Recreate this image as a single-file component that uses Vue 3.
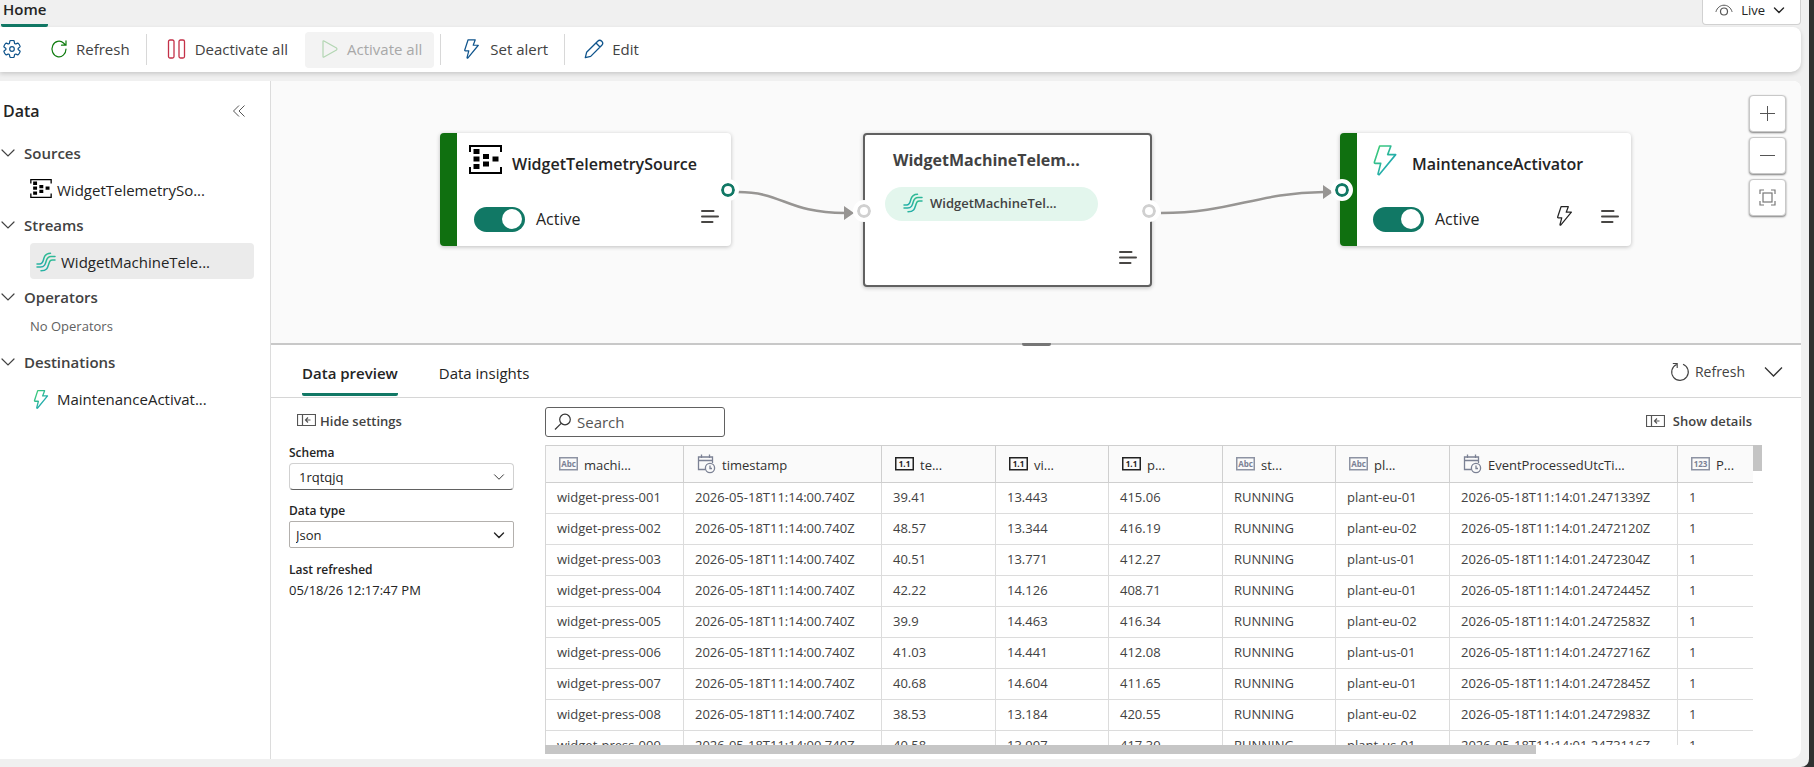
<script setup>
import { ref } from 'vue'

const ops = ref(true)
const act = ref(true)
const query = ref('')

const columns = [
  { name: 'machi...', type: 'Abc', width: 138 },
  { name: 'timestamp', type: 'date', width: 198 },
  { name: 'te...', type: '1.1', width: 114 },
  { name: 'vi...', type: '1.1', width: 113 },
  { name: 'p...', type: '1.1', width: 114 },
  { name: 'st...', type: 'Abc', width: 113 },
  { name: 'pl...', type: 'Abc', width: 114 },
  { name: 'EventProcessedUtcTi...', type: 'date', width: 228 },
  { name: 'P...', type: '123', width: 114 },
]

const stamp = '2026-05-18T11:14:00.740Z'
const rows = [
  ['001', '39.41', '13.443', '415.06', 'plant-eu-01', '1339'],
  ['002', '48.57', '13.344', '416.19', 'plant-eu-02', '2120'],
  ['003', '40.51', '13.771', '412.27', 'plant-us-01', '2304'],
  ['004', '42.22', '14.126', '408.71', 'plant-eu-01', '2445'],
  ['005', '39.9', '14.463', '416.34', 'plant-eu-02', '2583'],
  ['006', '41.03', '14.441', '412.08', 'plant-us-01', '2716'],
  ['007', '40.68', '14.604', '411.65', 'plant-eu-01', '2845'],
  ['008', '38.53', '13.184', '420.55', 'plant-eu-02', '2983'],
  ['009', '40.58', '13.997', '417.39', 'plant-us-01', '3116'],
].map(([id, temp, vib, pres, plant, tick]) => [
  `widget-press-${id}`, stamp, temp, vib, pres, 'RUNNING', plant,
  `2026-05-18T11:14:01.247${tick}Z`, '1',
])
</script>

<template>
  <svg class="defs" aria-hidden="true">
    <defs>
      <linearGradient id="teal" x1="0" y1="0" x2="1" y2="1">
        <stop offset="0.1" stop-color="#3ccb78" />
        <stop offset="0.7" stop-color="#22aab0" />
      </linearGradient>
      <symbol id="bolt" viewBox="0 0 22 29">
        <path d="M6 1H16.5L13.5 9H21L5.5 27.8Q4.3 28 4.5 26.8L7 17.2H2Q.8 17.2 1.1 16Z" fill="none" stroke-linejoin="round" />
      </symbol>
      <symbol id="stream" viewBox="0 0 20 20">
        <g fill="none" stroke-linecap="round">
          <path d="M1 12H3.5C6.8 12 7 9.500 7.800 6.500S10 1.200 14.500 1.200" />
          <path d="M1 15H4.500C8.800 15 9.300 12 10.200 9S12 4.600 15 4.600H19" />
          <path d="M5 18.800C11 18.800 11.600 16 12.600 12.500S14 8 16.500 8H19" />
        </g>
      </symbol>
      <symbol id="source" viewBox="0 0 33 29">
        <path d="M1 7V1H32V7M1 22V28H32V22" fill="none" stroke="#000" stroke-width="2" />
        <path d="M4.500 4h6v5h-6zM4.500 11.500h6v5h-6zM4.500 19h6v5h-6zM14 9h6v5h-6zM14 16.500h6v5h-6zM23.500 11.500h6v5h-6z" />
      </symbol>
      <symbol id="lines" viewBox="0 0 18 15">
        <path d="M1 2H12.500M1 7.500H17M1 13H11.500" fill="none" stroke="#484644" stroke-width="2" stroke-linecap="round" />
      </symbol>
      <symbol id="chevron" viewBox="0 0 16 16">
        <path d="M2 5L8 11L14 5" fill="none" stroke="currentColor" stroke-width="1.200" stroke-linecap="round" />
      </symbol>
      <symbol id="chevron-bold" viewBox="0 0 12 12">
        <path d="M1.500 4L6 8.500L10.500 4" fill="none" stroke="currentColor" stroke-width="1.400" stroke-linecap="round" />
      </symbol>
      <symbol id="pane" viewBox="0 0 19 12">
        <path d="M.5.5H18.500V11.500H.5ZM5.500.5V11.500M13.500 6H8.500M11 3.500L8.500 6L11 8.500" fill="none" stroke="#555" stroke-width="1.200" />
      </symbol>
    </defs>
  </svg>

  <div class="shell">
    <header class="top">
      <a class="home" href="#home">Home</a>
      <button class="live">
        <svg width="18" height="12" viewBox="0 0 18 12" fill="none" stroke="#555"><path d="M1 7.500C3.500-1 14.500-1 17 7.500" stroke-linecap="round" /><circle cx="9" cy="7.500" r="3.500" stroke-width="1.200" /></svg>
        <span>Live</span>
        <svg width="12" height="12"><use href="#chevron-bold" /></svg>
      </button>
    </header>

    <nav class="toolbar" aria-label="Commands">
      <button class="tool gear" aria-label="Settings">
        <svg width="20" height="20" viewBox="0 0 20 20" fill="none" stroke="#0f548c" stroke-width="1.200"><path d="M1.910 7.380A8.500 8.500 0 0 1 3.700 4.300a.5.500 0 0 1 .54-.13l1.920.68a1 1 0 0 0 1.320-.76l.36-2a.5.500 0 0 1 .4-.4 8.530 8.530 0 0 1 3.550 0c.2.040.35.200.38.400l.37 2a1 1 0 0 0 1.320.760l1.920-.68a.5.500 0 0 1 .54.130 8.500 8.500 0 0 1 1.780 3.080c.06.200 0 .400-.15.540l-1.560 1.320a1 1 0 0 0 0 1.520l1.560 1.320a.5.500 0 0 1 .15.540 8.500 8.500 0 0 1-1.780 3.080.5.500 0 0 1-.54.130l-1.920-.68a1 1 0 0 0-1.320.760l-.37 2a.5.500 0 0 1-.38.400 8.530 8.530 0 0 1-3.560 0 .5.500 0 0 1-.39-.4l-.36-2a1 1 0 0 0-1.320-.76l-1.920.68a.5.500 0 0 1-.54-.13 8.500 8.500 0 0 1-1.780-3.080.5.500 0 0 1 .15-.54l1.560-1.320a1 1 0 0 0 0-1.520L2.060 7.920a.5.500 0 0 1-.15-.54Z" /><circle cx="10" cy="10" r="2.300" /></svg>
      </button>
      <button class="tool refresh">
        <svg width="18" height="20" viewBox="0 0 18 20" fill="none" stroke="#107c10" stroke-width="1.200" stroke-linecap="round"><path d="M16 10A7 7.800 0 1 1 13.500 4L15.500 6M16 1.800V6.200H11.500" /></svg>
        Refresh
      </button>
      <i class="rule"></i>
      <button class="tool deactivate">
        <svg width="20" height="20" viewBox="0 0 20 20" fill="none" stroke="#c43148" stroke-width="1.300"><rect x="1.500" y="1" width="5.500" height="18" rx="1.500" /><rect x="12" y="1" width="5.500" height="18" rx="1.500" /></svg>
        Deactivate all
      </button>
      <button class="tool activate" disabled>
        <svg width="18" height="20" viewBox="0 0 18 20" fill="none" stroke="#b3d6b3" stroke-width="1.200" stroke-linejoin="round"><path d="M2 2.500V17.500Q2 18.500 3 18L15.500 11Q16.500 10 15.500 9L3 2Q2 1.500 2 2.500Z" /></svg>
        Activate all
      </button>
      <i class="rule"></i>
      <button class="tool alert">
        <svg class="navy" width="15" height="20"><use href="#bolt" /></svg>
        Set alert
      </button>
      <i class="rule"></i>
      <button class="tool edit">
        <svg width="20" height="20" viewBox="0 0 20 20" fill="none" stroke="#0f548c" stroke-width="1.300" stroke-linejoin="round"><path d="M1.300 18.700L2.600 13.300L13.700 2.200A2.900 2.900 0 0 1 17.800 6.300L6.700 17.400ZM12 4L16 8" /></svg>
        Edit
      </button>
    </nav>

    <div class="work">
      <aside class="side">
        <div class="side-head">
          <h2>Data</h2>
          <button class="bare" aria-label="Collapse data">
            <svg width="14" height="14" viewBox="0 0 14 14" fill="none" stroke="#555"><path d="M7 1.500L1.500 7L7 12.500M12.500 1.500L7 7L12.500 12.500" /></svg>
          </button>
        </div>
        <button class="group"><svg width="16" height="16"><use href="#chevron" /></svg>Sources</button>
        <a class="leaf" href="#source"><svg class="src" width="22" height="19"><use href="#source" /></svg>WidgetTelemetrySo...</a>
        <button class="group"><svg width="16" height="16"><use href="#chevron" /></svg>Streams</button>
        <a class="leaf picked" href="#stream"><svg class="flow" width="20" height="20"><use href="#stream" /></svg>WidgetMachineTele...</a>
        <button class="group"><svg width="16" height="16"><use href="#chevron" /></svg>Operators</button>
        <p class="none">No Operators</p>
        <button class="group"><svg width="16" height="16"><use href="#chevron" /></svg>Destinations</button>
        <a class="leaf" href="#destination"><svg class="flow small-bolt" width="22" height="19"><use href="#bolt" /></svg>MaintenanceActivat...</a>
      </aside>

      <main class="content">
        <section class="canvas" aria-label="Event flow">
          <svg class="edges" width="1400" height="262" fill="none" stroke="#979593" stroke-width="2.500">
            <path d="M467 111C512 111 516 132 574 132" />
            <path d="M890 132C960 132 984 112 1053 111" />
            <path d="M573 125L583 132L573 139ZM1052 104L1062 111L1052 118Z" fill="#979593" stroke="none" />
          </svg>

          <article class="node source-node">
            <div class="node-title"><svg width="33" height="29"><use href="#source" /></svg><h3>WidgetTelemetrySource</h3></div>
            <div class="node-foot">
              <label class="switch"><input v-model="ops" type="checkbox" role="switch" />Active</label>
              <button class="bare" aria-label="Source menu"><svg width="18" height="15"><use href="#lines" /></svg></button>
            </div>
            <i class="port right on"></i>
          </article>

          <article class="node stream-node">
            <h3>WidgetMachineTelem...</h3>
            <div class="pill"><svg class="flow" width="20" height="20"><use href="#stream" /></svg>WidgetMachineTel...</div>
            <button class="bare" aria-label="Stream menu"><svg width="18" height="15"><use href="#lines" /></svg></button>
            <i class="port left"></i>
            <i class="port right"></i>
          </article>

          <article class="node target-node">
            <div class="node-title"><svg class="flow" width="24" height="31"><use href="#bolt" /></svg><h3>MaintenanceActivator</h3></div>
            <div class="node-foot">
              <label class="switch"><input v-model="act" type="checkbox" role="switch" />Active</label>
              <button class="bare trigger" aria-label="Alerts"><svg class="ink" width="17" height="20"><use href="#bolt" /></svg></button>
              <button class="bare" aria-label="Destination menu"><svg width="18" height="15"><use href="#lines" /></svg></button>
            </div>
            <i class="port left on"></i>
          </article>

          <div class="zoom">
            <button aria-label="Zoom in"><svg width="18" height="18" fill="none" stroke="#555"><path d="M1 8.500H16M8.500 1V16" /></svg></button>
            <button aria-label="Zoom out"><svg width="18" height="18" fill="none" stroke="#555"><path d="M1 8.500H16" /></svg></button>
            <button aria-label="Fit to screen"><svg width="18" height="18" viewBox="0 0 18 18" fill="none" stroke="#777" stroke-width="1.200"><rect x="4" y="4" width="9" height="9" /><path d="M1 5V1H5M12 1H16V5M16 12V16H12M5 16H1V12" /></svg></button>
          </div>
        </section>

        <div class="splitter"><i></i></div>

        <section class="panel">
          <div class="tabs">
            <a class="tab current" href="#preview">Data preview</a>
            <a class="tab" href="#insights">Data insights</a>
            <button class="bare reload">
              <svg width="20" height="20" viewBox="0 0 20 20" fill="none" stroke="#444" stroke-width="1.100"><path d="M13 2.300A8.300 8.300 0 1 1 6.500 2.500M2.800 1.500H7.200V6" /></svg>
              Refresh
            </button>
            <button class="bare fold" aria-label="Collapse panel"><svg width="22" height="20" viewBox="0 0 22 20" fill="none" stroke="#333" stroke-width="1.300"><path d="M2 5.500L10.500 14L19 5.500" /></svg></button>
          </div>

          <div class="body">
            <form class="settings" @submit.prevent>
              <button class="bare hide" type="button"><svg width="19" height="12"><use href="#pane" /></svg>Hide settings</button>
              <label for="schema">Schema</label>
              <div class="pick soft"><select id="schema"><option>1rqtqjq</option></select><svg width="12" height="12"><use href="#chevron" /></svg></div>
              <label for="kind">Data type</label>
              <div class="pick"><select id="kind"><option>Json</option></select><svg width="12" height="12"><use href="#chevron-bold" /></svg></div>
              <b>Last refreshed</b>
              <span class="when">05/18/26 12:17:47 PM</span>
            </form>

            <div class="preview">
              <div class="find-row">
                <label class="find">
                  <svg width="18" height="18" viewBox="0 0 18 18" fill="none" stroke="#333" stroke-width="1.200"><circle cx="11" cy="6.500" r="5.300" /><path d="M7.200 10.300L1 16.500" /></svg>
                  <input v-model="query" type="text" placeholder="Search" aria-label="Search" />
                </label>
                <button class="bare details"><svg width="19" height="12"><use href="#pane" /></svg>Show details</button>
              </div>
              <div class="grid">
                <div class="scroll">
                  <table>
                    <colgroup><col v-for="c in columns" :key="c.name" :style="{ width: c.width + 'px' }" /></colgroup>
                    <thead>
                      <tr>
                        <th v-for="c in columns" :key="c.name" scope="col">
                          <span class="th">
                            <svg v-if="c.type === 'date'" width="19" height="20" viewBox="0 0 19 20" fill="none" stroke="#7b8194" stroke-width="1.300"><path d="M8 15.500H1.500V3H15.500V9M1.500 6.500H15.500M4.500 .5V4M12.500 .5V4" /><circle cx="13" cy="14" r="4.600" /><path d="M13 11.500V14.500H15" /></svg>
                            <svg v-else class="kind" :class="{ dark: c.type === '1.1' }" width="19" height="14" viewBox="0 0 19 14"><rect x=".75" y=".75" width="17.500" height="12" fill="none" stroke-width="1.500" /><text x="9.500" y="10" text-anchor="middle">{{ c.type }}</text></svg>
                            <span class="label">{{ c.name }}</span>
                          </span>
                        </th>
                      </tr>
                    </thead>
                    <tbody>
                      <tr v-for="r in rows" :key="r[0]"><td v-for="(v, i) in r" :key="i">{{ v }}</td></tr>
                    </tbody>
                  </table>
                </div>
                <div class="bar-y"></div>
                <div class="bar-x"></div>
              </div>
            </div>
          </div>
        </section>
      </main>
    </div>
  </div>
</template>

<style>
body { background: #303131; }
</style>

<style scoped>
.defs { position: absolute; width: 0; height: 0; }
.shell {
  box-sizing: border-box; height: 100vh; margin-right: 5px; padding-bottom: 8px;
  display: flex; flex-direction: column; overflow: hidden;
  background: #f0f0f0; border-bottom-right-radius: 8px;
  font: 15px/20px "Open Sans", "Noto Sans", sans-serif; color: #242424;
}
.shell *, .shell *::before { box-sizing: border-box; }
h2, h3, p { margin: 0; }
a { color: inherit; text-decoration: none; }
button, input, select { font: inherit; color: inherit; }
svg { display: block; flex: none; }
.bare { border: 0; padding: 0; background: none; display: flex; align-items: center; }
.flow { stroke: url(#teal); stroke-width: 1.500; }
.navy { stroke: #0f548c; stroke-width: 1.800; }
.ink { stroke: #242424; stroke-width: 1.800; }

.top { display: flex; justify-content: space-between; height: 27px; padding: 0 8px 0 1px; flex: none; }
.home { height: 27px; padding: 0 2px; font-weight: 600; line-height: 18px; border-bottom: 3px solid #117865; border-radius: 2px; }
.live { display: flex; align-items: center; gap: 8px; height: 25px; padding: 0 15px 5px 12px; background: #fff; border: 1px solid #d1d1d1; border-top: 0; border-radius: 0 0 4px 4px; font-size: 13px; }

.toolbar { display: flex; align-items: center; height: 45px; flex: none; margin-right: 8px; background: #fff; border-radius: 0 8px 10px 0; box-shadow: 0 2px 4px rgba(0, 0, 0, .16); color: #424242; }
.tool { display: flex; align-items: center; gap: 8px; height: 36px; border: 0; border-radius: 4px; padding: 0 16px 2px; background: none; white-space: nowrap; }
.tool.gear { padding-left: 2px; padding-right: 12px; }
.tool.deactivate { padding-left: 20px; padding-right: 17px; }
.tool.activate { background: #f3f3f3; color: #a8a8a8; padding-right: 12px; }
.tool.alert { padding-left: 23px; gap: 11px; }
.tool.edit { padding-left: 19px; }
.rule { width: 1px; height: 31px; background: #d8d8d8; }
.activate + .rule { margin-left: 6px; }

.work { flex: 1; min-height: 0; display: flex; margin: 9px 8px 0 0; border-radius: 0 8px 10px 0; overflow: hidden; background: #fff; }
.side { width: 271px; flex: none; border-right: 1px solid #dcdcdc; padding: 15px 16px 0 0; }
.side-head { display: flex; justify-content: space-between; align-items: center; height: 30px; padding: 0 8px 0 3px; margin-bottom: 16px; }
h2 { font-size: 16px; font-weight: 600; }
.group { display: flex; align-items: center; gap: 8px; height: 22px; padding: 0; border: 0; background: none; color: #424242; font-weight: 600; }
.leaf { display: flex; align-items: center; gap: 5px; height: 36px; margin: 7px 0 7px 30px; padding-top: 2px; white-space: nowrap; }
.leaf .src { margin-bottom: 4px; }
.small-bolt { stroke-width: 2; }
.picked { background: #ebebeb; border-radius: 4px; padding-left: 6px; }
.none { margin: 8px 0 15px 30px; font-size: 13px; line-height: 20px; color: #616161; }

.content { flex: 1; min-width: 0; display: flex; flex-direction: column; }
.canvas { position: relative; height: 262px; flex: none; background: #fafafa; overflow: hidden; }
.edges { position: absolute; left: 0; top: 0; }
.node { position: absolute; top: 52px; background: #fff; border-radius: 4px; box-shadow: 0 1px 4px rgba(0, 0, 0, .24); }
h3 { font-size: 16px; font-weight: 600; line-height: 20px; white-space: nowrap; }
.source-node, .target-node { width: 291px; height: 113px; border-left: 17px solid #107010; }
.source-node { left: 169px; padding: 12px 12px 0 12px; }
.target-node { left: 1069px; padding: 12px 12px 0 16px; }
.node-title { display: flex; align-items: center; height: 38px; gap: 10px; }
.node-title svg { align-self: flex-start; }
.target-node .node-title { gap: 15px; }
.node-foot { display: flex; align-items: center; height: 26px; margin-top: 23px; }
.source-node .switch { margin-left: 5px; }
.switch { display: flex; align-items: center; gap: 11px; margin-right: auto; font-size: 16px; }
.switch input { appearance: none; width: 51px; height: 25px; margin: 0; border-radius: 13px; background: #117865; display: flex; align-items: center; justify-content: flex-end; padding-right: 3px; }
.switch input:not(:checked) { background: #8a8a8a; justify-content: flex-start; padding-left: 3px; }
.switch input::before { content: ""; width: 20px; height: 20px; border-radius: 50%; background: #fff; }
.node-foot .bare { padding-bottom: 6px; }
.node-foot .trigger { margin-right: 28px; padding-bottom: 7px; }
.stream-node { left: 592px; width: 289px; height: 154px; border: 2px solid #616161; padding: 15px 13px 0 20px; }
.stream-node h3 { margin-left: 8px; font-weight: 700; color: #424242; }
.pill { display: flex; align-items: center; gap: 7px; width: 213px; height: 34px; margin-top: 17px; padding: 0 18px 2px; border-radius: 17px; background: #e3f6ed; font-size: 13px; font-weight: 600; color: #424242; }
.stream-node .bare { margin: 29px 0 0 auto; }
.port { position: absolute; width: 22px; height: 22px; border-radius: 50%; border: 4px solid #fff; background: #fff; box-shadow: inset 0 0 0 3px #d0d0d0; }
.port.on { box-shadow: inset 0 0 0 3px #117865; }
.source-node .port { right: -8px; top: 46px; }
.target-node .port { left: -26px; top: 46px; }
.stream-node .port { top: 65px; }
.stream-node .left { left: -12px; }
.stream-node .right { right: -10px; }
.zoom { position: absolute; right: 15px; top: 14px; display: flex; flex-direction: column; gap: 5px; }
.zoom button { width: 37px; height: 37px; padding: 0; display: grid; place-items: center; border: 1px solid #c8c8c8; border-radius: 4px; background: #fff; box-shadow: 0 1px 2px rgba(0, 0, 0, .5); }

.splitter { height: 2px; flex: none; background: #c8c8c8; display: flex; justify-content: center; align-items: center; }
.splitter i { width: 29px; height: 4px; flex: none; border-radius: 2px; background: #767676; }
.panel { flex: 1; min-height: 0; display: flex; flex-direction: column; }
.tabs { display: flex; align-items: center; height: 53px; flex: none; padding: 0 16px 0 31px; border-bottom: 1px solid #d6d6d6; }
.tab { align-self: flex-end; height: 36px; margin-right: 41px; line-height: 26px; border-bottom: 3px solid transparent; margin-bottom: 1px; }
.current { font-weight: 600; border-color: #117865; border-radius: 2px; }
.reload { gap: 5px; margin-left: auto; padding-top: 2px; font-size: 14px; color: #424242; }
.fold { margin-left: 18px; padding-top: 2px; }
.body { flex: 1; min-height: 0; display: flex; gap: 31px; padding-right: 39px; }
.settings { width: 243px; flex: none; padding: 13px 0 0 18px; display: flex; flex-direction: column; font-size: 13px; line-height: 20px; }
.hide { gap: 4px; margin-left: 8px; height: 20px; font-weight: 600; color: #424242; }
.hide svg { margin-bottom: 2px; }
.settings label, .settings b { font-size: 12px; font-weight: 600; height: 20px; }
.settings label { margin-top: 12px; }
.settings .soft + label { margin-top: 11px; }
.pick { position: relative; height: 27px; }
.pick select { appearance: none; width: 100%; height: 27px; padding: 0 6px; border: 1px solid #b3b0ad; border-radius: 2px; background: #fff; }
.soft select { padding: 0 9px; border-color: #d1d1d1; border-bottom-color: #616161; border-radius: 4px; }
.pick svg { position: absolute; right: 9px; top: 8px; pointer-events: none; }
.settings b { margin-top: 12px; }
.preview { flex: 1; min-width: 0; display: flex; flex-direction: column; padding-top: 9px; }
.find-row { display: flex; justify-content: space-between; align-items: center; height: 30px; margin: 0 10px 8px 0; flex: none; }
.find { display: flex; align-items: center; gap: 5px; width: 180px; height: 30px; padding: 0 8px; border: 1px solid #616161; border-radius: 3px; background: #fff; }
.find input { flex: 1; width: 0; border: 0; outline: 0; padding: 0; background: none; }
.find input::placeholder { color: #555; opacity: 1; }
.details { gap: 8px; padding-bottom: 2px; font-size: 13px; font-weight: 600; color: #424242; }
.grid { flex: 1; min-height: 0; display: grid; grid-template: minmax(0, 1fr) 9px / minmax(0, 1fr) 9px; padding-bottom: 5px; }
.scroll { overflow: auto; scrollbar-width: none; border-left: 1px solid #d6d6d6; }
table { table-layout: fixed; width: 1246px; border-collapse: separate; border-spacing: 0; font-size: 13px; color: #424242; }
th, td { padding: 0 11px; text-align: left; white-space: nowrap; border-right: 1px solid #dcdcdc; border-bottom: 1px solid #dcdcdc; }
th { height: 38px; padding-left: 13px; background: #fafafa; border-top: 1px solid #cfcfcf; border-color: #cfcfcf; font-weight: 400; color: #323130; }
td { height: 31px; padding-bottom: 3px; }
.th { display: flex; align-items: center; gap: 6px; }
.label { padding-top: 2px; }
.kind { margin-bottom: 1px; }
.kind rect { stroke: #8d93a3; }
.kind text { font: 700 8px "Open Sans", sans-serif; fill: #7b8194; }
.dark rect { stroke: #222; }
.dark text { fill: #222; }
.bar-y { height: 26px; background: #c4c4c4; }
.bar-x { width: 82%; background: #c6c6c6; }
</style>
